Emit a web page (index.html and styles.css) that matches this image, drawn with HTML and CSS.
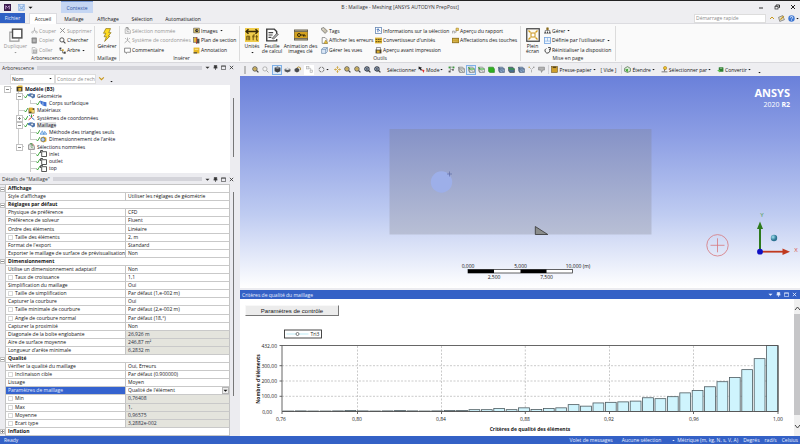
FILE: index.html
```html
<!DOCTYPE html>
<html lang="fr">
<head>
<meta charset="utf-8">
<title>B : Maillage - Meshing [ANSYS AUTODYN PrepPost]</title>
<link rel="stylesheet" href="styles.css">
</head>
<body>
<svg class="sprite" aria-hidden="true">
  <symbol id="app" viewBox="0 0 12 12"><rect width="12" height="12" fill="#3b1b4d"/><path d="M3 9V3l3 3 3-3v6" fill="none" stroke="#c9a7d8" stroke-width="1.5"/></symbol>
  <symbol id="save" viewBox="0 0 12 12"><rect x="1" y="1" width="10" height="10" fill="#dce9fa" stroke="#7da7dd"/><path d="M3 1v4h6V1M3 11V8h6v3M4 6l2 2 4-4" fill="none" stroke="#5c8fd0"/></symbol>
  <symbol id="dup" viewBox="0 0 24 24"><path d="M7 7H1.500v15.500H17V18" fill="#fff" stroke="#999" stroke-width="2"/><rect x="6" y="2" width="16" height="15" fill="#fff" stroke="#4d4d4d" stroke-width="2.500"/></symbol>
  <symbol id="cut" viewBox="0 0 12 12"><path d="M6 1v6M6 5L3 9M6 5l3 4" stroke="#aaa" stroke-width="1.300"/><circle cx="2.500" cy="9" r="1.500" fill="none" stroke="#aaa"/><circle cx="9.500" cy="9" r="1.500" fill="none" stroke="#aaa"/></symbol>
  <symbol id="copy" viewBox="0 0 12 12"><rect x="1" y="1" width="9" height="10" rx="1" fill="#888"/><path d="M3 4h5M3 6h5M3 8h5" stroke="#ddd"/></symbol>
  <symbol id="paste" viewBox="0 0 12 12"><path d="M2 1h5l3 3v7H2z" fill="#fff" stroke="#999"/><rect x="4.500" y="5" width="5" height="5" fill="#ccc" stroke="#999"/></symbol>
  <symbol id="cross" viewBox="0 0 12 12"><path d="M2 2l8 8M10 2l-8 8" stroke="#888" stroke-width="1.500"/></symbol>
  <symbol id="find" viewBox="0 0 12 12"><circle cx="5" cy="5" r="3.600" fill="#fff" stroke="#444" stroke-width="1.500"/><path d="M7.500 7.500L11 11" stroke="#444" stroke-width="2"/></symbol>
  <symbol id="treei" viewBox="0 0 12 12"><path d="M2 2v4h4v4h3" fill="none" stroke="#444"/><rect x="1" y="1" width="3" height="3" fill="#444"/><rect x="5" y="4" width="3" height="3" fill="#c49a22"/><rect x="8" y="8" width="3.500" height="3.500" fill="#444"/></symbol>
  <symbol id="bolt" viewBox="0 0 16 24"><path d="M6 1h8l-3 7h4l-5 6h3L4 23l3-8H3l3-6H2z" fill="#ffdc20" stroke="#8a7214" stroke-width="1.200"/></symbol>
  <symbol id="namesel" viewBox="0 0 12 12"><path d="M2 3h6l3 3v5H2z" fill="#eee" stroke="#999"/><path d="M3 1h4v4M5 6l3 3" fill="none" stroke="#888" stroke-width="1.500"/></symbol>
  <symbol id="axesg" viewBox="0 0 12 12"><path d="M6 6V1M6 6l5 4M6 6l-5 4M2 2l2 2M10 2L8 4" stroke="#999" stroke-width="1.300"/></symbol>
  <symbol id="comment" viewBox="0 0 12 12"><path d="M1 2h10v7H6l-2 2V9H1z" fill="#fff" stroke="#444"/></symbol>
  <symbol id="camera" viewBox="0 0 12 12"><path d="M1 2h10v8H1z" fill="#e1c76a" stroke="#555"/><circle cx="6.500" cy="6" r="2.600" fill="#222"/><circle cx="7" cy="5.500" r="1" fill="#ddd"/></symbol>
  <symbol id="section" viewBox="0 0 12 12"><rect x="5" y="3" width="6" height="8" fill="#4b4b4b"/><rect x="1" y="1" width="6" height="8" fill="#e2b93b" stroke="#555"/><path d="M6 0v12" stroke="#c22"/></symbol>
  <symbol id="annot" viewBox="0 0 12 12"><rect x="1" y="1" width="10" height="10" fill="#e8b824"/><path d="M1 9h6v2H1z" fill="#444"/><path d="M3 4h6" stroke="#f9e08a" stroke-width="2"/></symbol>
  <symbol id="units" viewBox="0 0 24 24"><rect width="24" height="24" fill="#f0cd4c"/><path d="M2 6h20M6 2L2 6l4 4M18 2l4 4-4 4" fill="none" stroke="#3a2c08" stroke-width="2.500"/><path d="M3 21v-7h5v7M5.500 14v7M14 21v-9h3M12.500 15h4M20 12v9h2M18 15h4" fill="none" stroke="#6d540e" stroke-width="1.700"/></symbol>
  <symbol id="sheet" viewBox="0 0 24 24"><path d="M20 11V6l-4-4H3v20h17v-3" fill="#fff" stroke="#3c3c3c" stroke-width="2.400"/><path d="M6 8h8M6 12h7M6 16h5" stroke="#444" stroke-width="2"/><path d="M12 18l8-9 3 2-8 8z" fill="#aaa" stroke="#444"/></symbol>
  <symbol id="film" viewBox="0 0 28 22"><rect width="28" height="22" fill="#66604e"/><rect x="1" y="5" width="26" height="12" fill="#d3a11f"/><path d="M3 2.500h23M3 19.500h23" stroke="#e9dcb0" stroke-width="2" stroke-dasharray="2 2"/><circle cx="10" cy="11" r="3" fill="none" stroke="#332808" stroke-width="2"/><path d="M13 11h9v3M19 11v3" fill="none" stroke="#332808" stroke-width="2"/></symbol>
  <symbol id="tag" viewBox="0 0 12 12"><path d="M1 2l4-1 6 6-4 4-6-6z" fill="#c9c3b0" stroke="#555"/><circle cx="3.500" cy="3.500" r="1" fill="#fff"/></symbol>
  <symbol id="errs" viewBox="0 0 12 12"><path d="M2 1h5l3 3v7H2z" fill="#fff" stroke="#555"/><path d="M8 5l4 6H5z" fill="#e8c03a" stroke="#6d5512" stroke-width=".6"/></symbol>
  <symbol id="views" viewBox="0 0 12 12"><path d="M1 4l3-3h7v7l-3 3H1z" fill="#dbe7f7" stroke="#56789f"/><path d="M1 4h7v7M8 4l3-3" fill="none" stroke="#56789f"/></symbol>
  <symbol id="info" viewBox="0 0 12 12"><rect x="1" y="1" width="10" height="10" fill="#fff" stroke="#6a89b4" stroke-width="1.400"/><path d="M5 3v6M3 5l2-2 4 4" fill="none" stroke="#3869b1" stroke-width="1.500"/></symbol>
  <symbol id="conv" viewBox="0 0 12 12"><rect y="1" width="12" height="10" fill="#e5bb3a"/><path d="M1 4h10M1 8h10" stroke="#4c3b0c" stroke-width="1.600" stroke-dasharray="3 1"/></symbol>
  <symbol id="preview" viewBox="0 0 12 12"><rect x="1" y="4" width="10" height="7" fill="#4c412a"/><rect x="3" y="1" width="6" height="4" fill="#fff" stroke="#555"/><rect x="3" y="6" width="5" height="4" fill="#dcae2c"/></symbol>
  <symbol id="report" viewBox="0 0 12 12"><path d="M1 11V7h3v4M5 9h2V5" fill="none" stroke="#777"/><path d="M7 2h4v4H7z" fill="#f4d463" stroke="#99771a"/></symbol>
  <symbol id="keyb" viewBox="0 0 12 12"><rect y="2" width="12" height="8" fill="#c9a12e" stroke="#6d540e"/><path d="M2 4.500h8M2 7.500h8" stroke="#f5e2a0" stroke-dasharray="1 1"/></symbol>
  <symbol id="full" viewBox="0 0 28 28"><rect x="1.500" y="1.500" width="25" height="25" fill="#fdfbf2" stroke="#454545" stroke-width="2.500"/><rect x="10" y="10" width="8" height="8" fill="#fff" stroke="#c9941a" stroke-width="2"/><path d="M9 9L5 5M19 9l4-4M9 19l-4 4M19 19l4 4" stroke="#d29b1c" stroke-width="2.500"/></symbol>
  <symbol id="manage" viewBox="0 0 12 12"><path d="M6 1v5M2 8V6h8v2" fill="none" stroke="#555"/><rect x="4" y="1" width="4" height="4" fill="#8a6b1b"/><path d="M0 11l2-4 2 4zM4 11l2-4 2 4zM8 11l2-4 2 4z" fill="#444"/></symbol>
  <symbol id="layout" viewBox="0 0 12 12"><rect x="1" y="1" width="10" height="10" fill="#eef5fd" stroke="#74a4de" stroke-width="1.400"/><path d="M6 1v6M1 7h10" stroke="#74a4de"/></symbol>
  <symbol id="reset" viewBox="0 0 12 12"><path d="M4 2.500a4.200 4.200 0 1 0 5 1" fill="none" stroke="#333" stroke-width="1.500"/><path d="M7 1h4v4" fill="none" stroke="#333" stroke-width="1.500"/></symbol>
  <symbol id="min" viewBox="0 0 12 12"><path d="M2 8h8" stroke="#333" stroke-width="2"/></symbol>
  <symbol id="restore" viewBox="0 0 12 12"><path d="M4 4V2h7v5H9" fill="none" stroke="#333" stroke-width="2"/><rect x="2" y="5" width="6" height="5" fill="none" stroke="#333" stroke-width="1.500"/></symbol>
  <symbol id="x" viewBox="0 0 12 12"><path d="M2 2l8 8M10 2l-8 8" stroke="currentColor" stroke-width="2"/></symbol>
  <symbol id="up" viewBox="0 0 12 12"><path d="M2 8l4-4 4 4" fill="none" stroke="#c9981c" stroke-width="2"/></symbol>
  <symbol id="down" viewBox="0 0 12 12"><path d="M2 4l4 4 4-4" fill="none" stroke="#c9981c" stroke-width="2"/></symbol>
  <symbol id="opt" viewBox="0 0 12 12"><path d="M1 4l7-3 3 7-8 3z" fill="#e7e0c9" stroke="#555"/><path d="M4 8l6-6" stroke="#c39622" stroke-width="2"/></symbol>
  <symbol id="help" viewBox="0 0 12 12"><circle cx="6" cy="6" r="5.500" fill="#3f78d3"/><path d="M4 4.500q0-2 2-2t2 1.700T6 7M6 8v1.500" fill="none" stroke="#fff" stroke-width="1.400"/></symbol>
  <symbol id="caret" viewBox="0 0 12 12"><path d="M1 4h10L6 9z" fill="currentColor"/></symbol>
  <symbol id="pin" viewBox="0 0 12 12"><path d="M3 1h6v6H3zM1 7h10M6 7v5" fill="currentColor" stroke="currentColor" stroke-width="1.500"/></symbol>
  <symbol id="maxi" viewBox="0 0 12 12"><path d="M1 2h10v9H1zM1 3h10" fill="none" stroke="currentColor" stroke-width="1.500"/></symbol>
  <symbol id="check" viewBox="0 0 8 12"><path d="M1 7l2 3 5-8" fill="none" stroke="#2f9d2b" stroke-width="1.800"/></symbol>
  <symbol id="model" viewBox="0 0 12 12"><rect x="1" y="3" width="10" height="8" fill="#3d3525"/><path d="M1 3l3-2h7v3" fill="#e1b73a"/><rect x="4" y="5" width="5" height="5" fill="#e1b73a"/></symbol>
  <symbol id="geom" viewBox="0 0 12 12"><path d="M0 4l4-2 4 1 4 1v5l-4 2-3-3-5-1z" fill="#4d79bb"/><circle cx="7" cy="6" r="2.500" fill="#dbe6f4" stroke="#35496b"/></symbol>
  <symbol id="bodyi" viewBox="0 0 12 12"><path d="M0 1l6 2 5 1v7l-6-1-4-4z" fill="#3e6fd0"/><path d="M5 4v6" stroke="#fff"/></symbol>
  <symbol id="mat" viewBox="0 0 12 12"><rect x="1" y="2" width="10" height="9" fill="#584a21"/><path d="M2 1h6v7H2z" fill="#e0b02d"/><path d="M6 5h5v5H6z" fill="#efd276"/></symbol>
  <symbol id="axes" viewBox="0 0 12 12"><path d="M6 6V1" stroke="#2b9b2b" stroke-width="1.600"/><path d="M6 6l5 4M2 2l2 2" stroke="#2e67c8" stroke-width="1.600"/><path d="M6 6l-5 4M10 2L8 4" stroke="#d33" stroke-width="1.600"/></symbol>
  <symbol id="meth" viewBox="0 0 12 12"><path d="M0 9l4-6 3 6zM6 9l2-5 4 5z" fill="#bcd7f5" stroke="#3f84d2"/></symbol>
  <symbol id="sizing" viewBox="0 0 12 12"><path d="M1 3l5-2 5 2v6l-5 2-5-2z" fill="#d9a82a"/><circle cx="5" cy="6" r="3.300" fill="#b8cef0" stroke="#35588f"/></symbol>
  <symbol id="nsel" viewBox="0 0 12 12"><path d="M1 3h6l4 3v5H1z" fill="#e8e8e8" stroke="#555"/><path d="M3 1h4v5M5 6l3 3" fill="none" stroke="#3c8b3c" stroke-width="1.400"/><path d="M8 1l3 4" stroke="#c44"/></symbol>
  <symbol id="cube" viewBox="0 0 12 12"><rect x="3" y="3" width="8" height="8" fill="#fff" stroke="#333" stroke-width="1.400"/><path d="M1 1h4M1 1v4" stroke="#333" stroke-width="1.600"/></symbol>
  <symbol id="zoomi" viewBox="0 0 12 12"><circle cx="5" cy="5" r="3.800" fill="#e9cf7c" stroke="#4c4a45" stroke-width="1.500"/><path d="M3 5h4" stroke="#7a5a0a"/><path d="M8 8l3 3" stroke="#444" stroke-width="2.200"/></symbol>
  <symbol id="zoomb" viewBox="0 0 12 12"><circle cx="5" cy="5" r="3.800" fill="#9fb6d6" stroke="#3d434c" stroke-width="1.800"/><circle cx="5" cy="5" r="1.500" fill="#444"/><path d="M8 8l3 3" stroke="#444" stroke-width="2.200"/></symbol>
  <symbol id="zoomg" viewBox="0 0 12 12"><circle cx="5" cy="5" r="3.600" fill="#f6f6f6" stroke="#999" stroke-width="1.200"/><path d="M8 8l3 3" stroke="#999" stroke-width="1.600"/></symbol>
  <symbol id="solid" viewBox="0 0 12 12"><path d="M1 3l5-2 5 2v6l-5 2-5-2z" fill="#3e4145"/><path d="M1 3l5 2 5-2-5-2z" fill="#8c9096"/></symbol>
  <symbol id="solid2" viewBox="0 0 12 12"><path d="M1 5l5-2 5 2v4l-5 2-5-2z" fill="#55585c"/><path d="M1 5l5 2 5-2-5-2z" fill="#e5e7ea"/></symbol>
  <symbol id="rotc" viewBox="0 0 12 12"><path d="M1 5l4-2 4 2v4l-4 2-4-2z" fill="#4a4c50"/><path d="M5 3q3-3 6 0v4" fill="none" stroke="#b08a2a" stroke-width="1.600"/></symbol>
  <symbol id="link" viewBox="0 0 12 12"><rect x="1" y="1" width="4" height="4" fill="#eee" stroke="#aaa"/><rect x="7" y="7" width="4" height="4" fill="#eee" stroke="#aaa"/><path d="M5 4h3v3" fill="none" stroke="#aaa"/></symbol>
  <symbol id="rot" viewBox="0 0 12 12"><circle cx="6" cy="6" r="4.200" fill="none" stroke="#666" stroke-width="1.500" stroke-dasharray="5 1.600"/></symbol>
  <symbol id="pan" viewBox="0 0 12 12"><path d="M6 0l2 3H4zM6 12l2-3H4zM0 6l3-2v4zM12 6L9 4v4z" fill="#c99a22"/><path d="M6 3v6M3 6h6" stroke="#c99a22" stroke-width="1.200"/><circle cx="6" cy="6" r="1" fill="#fff"/></symbol>
  <symbol id="mode" viewBox="0 0 12 12"><path d="M1 1l6 2-2 1 2 3-2 1-2-3-2 1z" fill="#222"/><path d="M6 6l5 1-1 5z" fill="#d33"/></symbol>
  <symbol id="selp" viewBox="0 0 12 12"><path d="M4 1v10M4 2h6M4 6h4" stroke="#888" stroke-width="1.200" fill="none"/><rect x="1" y="1" width="3" height="3" fill="#3c9b3c"/><rect x="8" y="1" width="3" height="3" fill="#3c9b3c"/><rect x="7" y="5" width="3" height="3" fill="#666"/><rect x="1" y="8" width="3" height="3" fill="#555"/></symbol>
  <symbol id="selc" viewBox="0 0 12 12"><path d="M1 2h7l3 3v6H3L1 8z" fill="#dfe3df" stroke="#666"/><path d="M1 2l2 3h8M3 5v6M5 7l4 3" fill="none" stroke="#666"/></symbol>
  <symbol id="sele" viewBox="0 0 12 12"><path d="M1 2h7l3 3v6H3L1 8z" fill="#e8ece8" stroke="#666"/><path d="M1 2l2 3h8" fill="none" stroke="#2da52d" stroke-width="1.800"/><path d="M3 5v6M6 7l3 3" stroke="#555"/></symbol>
  <symbol id="selb" viewBox="0 0 12 12"><path d="M1 2h8l2 3v6H3L1 9z" fill="#2fb020" stroke="#257a1d"/></symbol>
  <symbol id="seln" viewBox="0 0 12 12"><path d="M1 2h7l3 3v6H3L1 8z" fill="#8caad0" stroke="#3c506d"/><path d="M1 2l2 3h8M3 5v6M6 7l3 3" fill="none" stroke="#2f3c50"/></symbol>
  <symbol id="selm" viewBox="0 0 12 12"><path d="M1 2h7l3 3v6H3L1 8z" fill="#49708f" stroke="#333"/><path d="M1 2l2 3h8" fill="none" stroke="#2da52d" stroke-width="1.800"/></symbol>
  <symbol id="pts" viewBox="0 0 12 12"><path d="M2 2l3 3M10 2L7 5M6 6v5" stroke="#aaa" stroke-width="1.500"/><circle cx="2" cy="2" r="1.200" fill="#c99a22"/><circle cx="10" cy="2" r="1.200" fill="#888"/></symbol>
  <symbol id="tagg" viewBox="0 0 12 12"><path d="M1 2h10v5H8l-2 4-1-4H1z" fill="#b3b3b3" stroke="#777"/></symbol>
  <symbol id="clip" viewBox="0 0 12 12"><rect x="1" y="1" width="10" height="10" fill="#cf9f2c" stroke="#6b531b"/><rect x="3" y="1" width="6" height="2.500" fill="#5d4a1b"/></symbol>
  <symbol id="ext" viewBox="0 0 12 12"><path d="M1 4l5-3 5 3v5l-5 2-5-2z" fill="#d8ead3" stroke="#4f6a4a" stroke-width="1.200"/><path d="M2 6l5-1-1 6z" fill="#35a52c"/></symbol>
  <symbol id="selby" viewBox="0 0 12 12"><circle cx="7" cy="3.500" r="2.800" fill="#efc12e" stroke="#a67c15"/><path d="M6 6v3M1 10h10" stroke="#555" stroke-width="1.300"/></symbol>
  <symbol id="cvt" viewBox="0 0 12 12"><rect x="3" y="2" width="8" height="8" rx="1" fill="#2f7f32"/><path d="M0 7h5v4z" fill="#5dc04e"/><path d="M5 4h4" stroke="#bfe5b8"/></symbol>
</svg>

<header class="titlebar">
  <div class="quick">
    <svg class="ic"><use href="#app"/></svg>
    <button class="icb" aria-label="Enregistrer"><svg class="ic"><use href="#save"/></svg></button>
    <svg class="ic tiny"><use href="#caret"/></svg>
    <span class="context">Contexte</span>
  </div>
  <h1>B : Maillage - Meshing [ANSYS AUTODYN PrepPost]</h1>
  <div class="winbtns">
    <button aria-label="Réduire"><svg class="ic sm"><use href="#min"/></svg></button>
    <button aria-label="Restaurer"><svg class="ic sm"><use href="#restore"/></svg></button>
    <button aria-label="Fermer"><svg class="ic sm"><use href="#x"/></svg></button>
  </div>
</header>
<nav class="tabs">
  <button class="tab file">Fichier</button>
  <button class="tab active">Accueil</button>
  <button class="tab">Maillage</button>
  <button class="tab">Affichage</button>
  <button class="tab">Sélection</button>
  <button class="tab auto">Automatisation</button>
  <div class="launch">
    <input type="text" aria-label="Démarrage rapide" placeholder="Démarrage rapide">
    <button class="icb" aria-label="Replier"><svg class="ic sm"><use href="#up"/></svg></button>
    <button class="icb" aria-label="Options"><svg class="ic"><use href="#opt"/></svg></button>
    <button class="icb" aria-label="Aide"><svg class="ic"><use href="#help"/></svg></button>
    <svg class="ic caret"><use href="#caret"/></svg>
  </div>
</nav>

<section class="ribbon">
  <div class="group g-tree">
    <div class="items">
      <button class="big off"><svg class="bi"><use href="#dup"/></svg><span>Dupliquer</span><svg class="ic caret"><use href="#caret"/></svg></button>
      <div class="stack">
        <button class="off"><svg class="ic"><use href="#cut"/></svg>Couper</button>
        <button class="off"><svg class="ic"><use href="#copy"/></svg>Copier</button>
        <button class="off"><svg class="ic"><use href="#paste"/></svg>Coller</button>
      </div>
      <div class="stack">
        <button class="off"><svg class="ic"><use href="#cross"/></svg>Supprimer</button>
        <button><svg class="ic"><use href="#find"/></svg>Chercher</button>
        <button><svg class="ic"><use href="#treei"/></svg>Arbre<svg class="ic caret"><use href="#caret"/></svg></button>
      </div>
    </div>
    <h2>Arborescence</h2>
  </div>
  <div class="group g-mesh">
    <div class="items"><button class="big"><svg class="bi"><use href="#bolt"/></svg><span>Générer</span></button></div>
    <h2>Maillage</h2>
  </div>
  <div class="group g-insert">
    <div class="items">
      <div class="stack">
        <button class="off"><svg class="ic"><use href="#namesel"/></svg>Sélection nommée</button>
        <button class="off"><svg class="ic"><use href="#axesg"/></svg>Système de coordonnées</button>
        <button><svg class="ic"><use href="#comment"/></svg>Commentaire</button>
      </div>
      <div class="stack">
        <button><svg class="ic"><use href="#camera"/></svg>Images<svg class="ic caret"><use href="#caret"/></svg></button>
        <button><svg class="ic"><use href="#section"/></svg>Plan de section</button>
        <button><svg class="ic"><use href="#annot"/></svg>Annotation</button>
      </div>
    </div>
    <h2>Insérer</h2>
  </div>
  <div class="group g-tools">
    <div class="items">
      <button class="big"><svg class="bi"><use href="#units"/></svg><span>Unités</span><svg class="ic caret"><use href="#caret"/></svg></button>
      <button class="big"><svg class="bi"><use href="#sheet"/></svg><span>Feuille<br>de calcul</span></button>
      <button class="big"><svg class="bi"><use href="#film"/></svg><span>Animation des<br>images clé</span></button>
      <div class="stack">
        <button><svg class="ic"><use href="#tag"/></svg>Tags</button>
        <button><svg class="ic"><use href="#errs"/></svg>Afficher les erreurs</button>
        <button><svg class="ic"><use href="#views"/></svg>Gérer les vues</button>
      </div>
      <div class="stack">
        <button><svg class="ic"><use href="#info"/></svg>Informations sur la sélection</button>
        <button><svg class="ic"><use href="#conv"/></svg>Convertisseur d'unités</button>
        <button><svg class="ic"><use href="#preview"/></svg>Aperçu avant impression</button>
      </div>
      <div class="stack">
        <button><svg class="ic"><use href="#report"/></svg>Aperçu du rapport</button>
        <button><svg class="ic"><use href="#keyb"/></svg>Affectations des touches</button>
      </div>
    </div>
    <h2>Outils</h2>
  </div>
  <div class="group g-page">
    <div class="items">
      <button class="big"><svg class="bi"><use href="#full"/></svg><span>Plein<br>écran</span></button>
      <div class="stack">
        <button><svg class="ic"><use href="#manage"/></svg>Gérer<svg class="ic caret"><use href="#caret"/></svg></button>
        <button><svg class="ic"><use href="#layout"/></svg>Définie par l'utilisateur<svg class="ic caret"><use href="#caret"/></svg></button>
        <button><svg class="ic"><use href="#reset"/></svg>Réinitialiser la disposition</button>
      </div>
    </div>
    <h2>Mise en page</h2>
  </div>
</section>

<main>
  <aside class="left">
    <div class="phead"><h3>Arborescence</h3><i class="grip"></i><svg class="ic ph"><use href="#caret"/></svg><svg class="ic ph"><use href="#pin"/></svg><svg class="ic ph"><use href="#maxi"/></svg><svg class="ic ph"><use href="#x"/></svg></div>
    <div class="filter">
      <div class="drop"><select aria-label="Filtre"><option>Nom</option></select><svg class="ic caret"><use href="#caret"/></svg></div>
      <input type="text" aria-label="Recherche" placeholder="Contour de rech">
      <button class="icb" aria-label="Développer"><svg class="ic"><use href="#down"/></svg></button>
      <svg class="ic caret low"><use href="#caret"/></svg>
    </div>
    <div class="pane">
      <ul class="tree">
        <li><i class="exp"></i><i class="ck"></i><svg class="ic"><use href="#model"/></svg><b>Modèle (B3)</b></li>
        <li><i class="sp"></i><i class="exp v"></i><svg class="ck"><use href="#check"/></svg><svg class="ic"><use href="#geom"/></svg><span>Géométrie</span></li>
        <li><i class="sp"></i><i class="v"></i><i class="v h last"></i><svg class="ck"><use href="#check"/></svg><svg class="ic"><use href="#bodyi"/></svg><span>Corps surfacique</span></li>
        <li><i class="sp"></i><i class="v h"></i><svg class="ck"><use href="#check"/></svg><svg class="ic"><use href="#mat"/></svg><span>Matériaux</span></li>
        <li><i class="sp"></i><i class="exp plus v"></i><svg class="ck"><use href="#check"/></svg><svg class="ic"><use href="#axes"/></svg><span>Systèmes de coordonnées</span></li>
        <li><i class="sp"></i><i class="exp v"></i><svg class="ck"><use href="#check"/></svg><svg class="ic"><use href="#geom"/></svg><span class="cur">Maillage</span></li>
        <li><i class="sp"></i><i class="v"></i><i class="v h"></i><svg class="ck"><use href="#check"/></svg><svg class="ic"><use href="#meth"/></svg><span>Méthode des triangles seuls</span></li>
        <li><i class="sp"></i><i class="v"></i><i class="v h last"></i><svg class="ck"><use href="#check"/></svg><svg class="ic"><use href="#sizing"/></svg><span>Dimensionnement de l'arête</span></li>
        <li><i class="sp"></i><i class="exp last v"></i><i class="ck"></i><svg class="ic"><use href="#nsel"/></svg><span>Sélections nommées</span></li>
        <li><i class="sp"></i><i class="sp"></i><i class="v h"></i><svg class="ck"><use href="#check"/></svg><svg class="ic"><use href="#cube"/></svg><span>inlet</span></li>
        <li><i class="sp"></i><i class="sp"></i><i class="v h"></i><svg class="ck"><use href="#check"/></svg><svg class="ic"><use href="#cube"/></svg><span>outlet</span></li>
        <li><i class="sp"></i><i class="sp"></i><i class="v h"></i><svg class="ck"><use href="#check"/></svg><svg class="ic"><use href="#cube"/></svg><span>top</span></li>
      </ul>
      <div class="bar bar-tree"><i></i></div>
    </div>
    <div class="phead details"><h3>Détails de "Maillage"</h3><i class="grip"></i><svg class="ic ph"><use href="#caret"/></svg><svg class="ic ph"><use href="#pin"/></svg><svg class="ic ph"><use href="#maxi"/></svg><svg class="ic ph"><use href="#x"/></svg></div>
    <div class="pane">
      <table>
        <tr class="cat"><td><i class="box"></i></td><th colspan="2">Affichage</th></tr>
        <tr><td></td><td>Style d'affichage</td><td>Utiliser les réglages de géométrie</td></tr>
        <tr class="cat"><td><i class="box"></i></td><th colspan="2">Réglages par défaut</th></tr>
        <tr><td></td><td>Physique de préférence</td><td>CFD</td></tr>
        <tr><td></td><td>Préférence de solveur</td><td>Fluent</td></tr>
        <tr><td></td><td>Ordre des éléments</td><td>Linéaire</td></tr>
        <tr><td></td><td><label><input type="checkbox">Taille des éléments</label></td><td>2, m</td></tr>
        <tr><td></td><td>Format de l'export</td><td>Standard</td></tr>
        <tr><td></td><td>Exporter le maillage de surface de prévisualisation</td><td>Non</td></tr>
        <tr class="cat"><td><i class="box"></i></td><th colspan="2">Dimensionnement</th></tr>
        <tr><td></td><td>Utilise un dimensionnement adaptatif</td><td>Non</td></tr>
        <tr><td></td><td><label><input type="checkbox">Taux de croissance</label></td><td>1,1</td></tr>
        <tr><td></td><td>Simplification du maillage</td><td>Oui</td></tr>
        <tr><td></td><td><label><input type="checkbox">Taille de simplification</label></td><td>Par défaut (1,e-002 m)</td></tr>
        <tr><td></td><td>Capturer la courbure</td><td>Oui</td></tr>
        <tr><td></td><td><label><input type="checkbox">Taille minimale de courbure</label></td><td>Par défaut (2,e-002 m)</td></tr>
        <tr><td></td><td><label><input type="checkbox">Angle de courbure normal</label></td><td>Par défaut (18,°)</td></tr>
        <tr><td></td><td>Capturer la proximité</td><td>Non</td></tr>
        <tr class="ro"><td></td><td>Diagonale de la boîte englobante</td><td>26,926 m</td></tr>
        <tr class="ro"><td></td><td>Aire de surface moyenne</td><td>246,87 m²</td></tr>
        <tr class="ro"><td></td><td>Longueur d'arête minimale</td><td>6,2832 m</td></tr>
        <tr class="cat"><td><i class="box"></i></td><th colspan="2">Qualité</th></tr>
        <tr><td></td><td>Vérifier la qualité du maillage</td><td>Oui, Erreurs</td></tr>
        <tr><td></td><td><label><input type="checkbox">Inclinaison cible</label></td><td>Par défaut (0.900000)</td></tr>
        <tr><td></td><td>Lissage</td><td>Moyen</td></tr>
        <tr class="sel"><td></td><td><label for="metric">Paramètres de maillage</label></td><td><div class="pick"><select id="metric"><option>Qualité de l'élément</option></select><span class="arrow"><svg class="ic"><use href="#caret"/></svg></span></div></td></tr>
        <tr class="ro"><td></td><td><label><input type="checkbox">Min</label></td><td>0,76408</td></tr>
        <tr class="ro"><td></td><td><label><input type="checkbox">Max</label></td><td>1,</td></tr>
        <tr class="ro"><td></td><td><label><input type="checkbox">Moyenne</label></td><td>0,96575</td></tr>
        <tr class="ro"><td></td><td><label><input type="checkbox">Ecart type</label></td><td>3,2882e-002</td></tr>
        <tr class="cat"><td><i class="box plus"></i></td><th colspan="2">Inflation</th></tr>
      </table>
      <div class="bar bar-det"><i></i></div>
    </div>
  </aside>

  <section class="right">
    <div class="tools">
      <i class="handle"></i>
      <button><svg class="ic"><use href="#zoomi"/></svg></button><button class="wide"><svg class="ic"><use href="#zoomg"/></svg></button>
      <button class="on"><svg class="ic"><use href="#solid"/></svg></button><button><svg class="ic"><use href="#solid2"/></svg></button><button class="wide"><svg class="ic"><use href="#rotc"/></svg></button>
      <button class="pale"><svg class="ic"><use href="#link"/></svg></button>
      <button class="wide rot"><svg class="ic"><use href="#rot"/></svg><svg class="ic caret"><use href="#caret"/></svg></button>
      <button><svg class="ic"><use href="#pan"/></svg></button><button><svg class="ic"><use href="#zoomi"/></svg></button><button><svg class="ic"><use href="#zoomi"/></svg></button><button><svg class="ic"><use href="#zoomb"/></svg></button><button><svg class="ic"><use href="#zoomb"/></svg></button>
      <span class="lbl">Sélectionner</span>
      <button class="txt mode"><svg class="ic"><use href="#mode"/></svg>Mode<svg class="ic caret"><use href="#caret"/></svg></button>
      <button><svg class="ic"><use href="#selp"/></svg></button><button><svg class="ic"><use href="#selc"/></svg></button><button class="on"><svg class="ic"><use href="#sele"/></svg></button><button><svg class="ic"><use href="#sele"/></svg></button><button><svg class="ic"><use href="#selb"/></svg></button><button><svg class="ic"><use href="#seln"/></svg></button><button><svg class="ic"><use href="#selm"/></svg></button><button><svg class="ic"><use href="#seln"/></svg></button><button><svg class="ic"><use href="#pts"/></svg></button><button><svg class="ic"><use href="#tagg"/></svg></button>
      <i class="vsep"></i>
      <button class="txt clip"><svg class="ic"><use href="#clip"/></svg>Presse-papier<svg class="ic caret"><use href="#caret"/></svg></button>
      <span class="vide">[ Vide ]</span>
      <i class="vsep"></i>
      <button class="txt"><svg class="ic"><use href="#ext"/></svg>Étendre<svg class="ic caret"><use href="#caret"/></svg></button>
      <button class="txt"><svg class="ic"><use href="#selby"/></svg>Sélectionner par<svg class="ic caret"><use href="#caret"/></svg></button>
      <button class="txt"><svg class="ic"><use href="#cvt"/></svg>Convertir<svg class="ic caret"><use href="#caret"/></svg></button>
      <svg class="ic caret low"><use href="#caret"/></svg>
    </div>

    <div class="view">
      <svg class="scene" viewBox="240 75 560 212">
        <defs>
          <radialGradient id="ball" cx=".35" cy=".35"><stop offset="0" stop-color="#9fe3f2"/><stop offset="1" stop-color="#2b7290"/></radialGradient>
          <linearGradient id="plate" x2="0" y2="1"><stop offset="0" stop-color="#8592c7"/><stop offset="1" stop-color="#b8bfd5"/></linearGradient>
        </defs>
        <rect x="389.500" y="128" width="262" height="105.500" fill="url(#plate)"/>
        <circle cx="441.500" cy="181" r="10.700" fill="#9dafe9"/>
        <path d="M447 173h5M449.500 170.500v5" stroke="#5562a0" stroke-width=".6"/>
        <path d="M535.300 225.500v8h12.500z" fill="#8a8d8c" stroke="#333" stroke-width=".8"/>
        <rect x="468" y="268.500" width="104.500" height="3.500" fill="#fff" stroke="#222" stroke-width=".7"/>
        <path d="M468 268.500h26v3.500h-26zM520.500 268.500h26v3.500h-26z" fill="#000"/>
        <g class="scale"><text x="468" y="267">0,000</text><text x="520.500" y="267">5,000</text><text x="578" y="267">10,000 (m)</text><text x="494" y="278">2,500</text><text x="546.500" y="278">7,500</text></g>
        <g fill="none" stroke="#d7777c" stroke-width=".8"><circle cx="717.500" cy="244.300" r="10.700"/><path d="M710.500 244.300h14M717.500 237.300v14"/></g>
        <path d="M760 250v-23" stroke="#2d7a1c" stroke-width="2"/><path d="M757 228l3-7.500 3 7.500z" fill="#2d7a1c"/>
        <path d="M760 250.700h24" stroke="#c0391f" stroke-width="1.800"/><path d="M782.500 247.500l7.500 3.200-7.500 3.200z" fill="#c0391f"/>
        <circle cx="760" cy="250.700" r="2.900" fill="#1010c4"/><circle cx="774" cy="237" r="3.200" fill="url(#ball)"/>
        <text x="762" y="216" class="ay">Y</text><text x="796" y="251" class="ax">X</text>
      </svg>
      <div class="brand"><strong>ANSYS</strong><span>2020 <b>R2</b></span></div>
    </div>

    <div class="chart">
      <div class="chead"><h3>Critères de qualité du maillage</h3><svg class="ic ph"><use href="#caret"/></svg><svg class="ic ph"><use href="#pin"/></svg><svg class="ic ph"><use href="#maxi"/></svg><svg class="ic ph"><use href="#x"/></svg></div>
      <div class="cbody">
        <div class="cmain">
          <button class="ctrl">Paramètres de contrôle</button>
          <svg class="plot" viewBox="240 316 554 120">
            <rect x="284.500" y="330" width="37" height="8" fill="#fff" stroke="#333" stroke-width=".9"/>
            <path d="M286.500 334h22" stroke="#c9eef7" stroke-width="1.200"/><circle cx="297.500" cy="334" r="1.500" fill="#fff" stroke="#333" stroke-width=".6"/>
            <text x="315" y="336" class="leg">Tri3</text>
            <g stroke="#b5b5b5" stroke-width=".7" stroke-dasharray="2 1.500"><path d="M282 365.700h496M282 381h496M282 396.300h496M357.500 346v65M441.500 346v65M525.300 346v65M609.500 346v65M693.500 346v65"/></g>
            <g id="bars"></g>
            <path d="M282 411.500v-66h496.300v66zM279.500 345.500h2.500M279.500 365.700h2.500M279.500 381h2.500M279.500 396.300h2.500M282 411.500v2.500M357.500 411.500v2.500M441.500 411.500v2.500M525.300 411.500v2.500M609.500 411.500v2.500M693.500 411.500v2.500M778 411.500v2.500" fill="none" stroke="#555" stroke-width=".9"/>
            <g class="yt"><text x="277" y="348">432,00</text><text x="277" y="368">300,00</text><text x="277" y="383">200,00</text><text x="277" y="398">100,00</text><text x="272" y="414">0,00</text></g>
            <g class="xt"><text x="281" y="421">0,76</text><text x="357" y="421">0,80</text><text x="441" y="421">0,84</text><text x="525" y="421">0,88</text><text x="609" y="421">0,92</text><text x="694" y="421">0,96</text><text x="778" y="421">1,00</text></g>
            <text class="ttl" x="530" y="431">Critères de qualité des éléments</text>
            <text class="ttl" transform="translate(260 379) rotate(-90)">Nombre d'éléments</text>
          </svg>
        </div>
        <div class="vscroll"><svg class="ic sm"><path d="M1 5l2.500-3L6 5"/></svg><i></i><svg class="ic sm"><path d="M1 1l2.500 3L6 1"/></svg></div>
      </div>
    </div>
  </section>
</main>

<footer><span class="ready">Ready</span><span>Volet de messages</span><span class="none">Aucune sélection</span><span><svg class="ic caret flip"><use href="#caret"/></svg> Métrique (m, kg, N, s, V, A)</span><span class="deg">Degrés</span><span class="rad">rad/s</span><span>Celsius</span></footer>
<script src="script.js"></script>
</body>
</html>
```
FILE: styles.css
```css
* { box-sizing: border-box; }
html, body { height: 100%; }
body {
  margin: 0; display: flex; flex-direction: column; overflow: hidden;
  background: #ececf0; color: #141414;
  font: 5px/6px "Open Sans", "Noto Sans", sans-serif;
}
button, input, select { font: inherit; color: inherit; margin: 0; padding: 0; border: 0; background: none; border-radius: 0; appearance: none; }
h1, h2, h3 { margin: 0; font: inherit; white-space: nowrap; }
ul { list-style: none; margin: 0; padding: 0; }
i { display: block; flex: none; }
.sprite { position: absolute; width: 0; height: 0; }
.ic { width: 7px; height: 7px; flex: none; display: block; }
.ic.sm { width: 6px; height: 6px; }
.ic.tiny { width: 5px; height: 5px; }
.ic.caret { width: 3px; height: 3px; margin-left: 1px; }
.icb { display: flex; align-items: center; }

.titlebar { border-top: 1px solid #222; height: 13px; display: grid; grid-template-columns: 1fr auto 1fr; align-items: center; background: #eeeef1; }
.titlebar h1 { color: #333; }
.quick { display: flex; align-items: center; gap: 3px; height: 12px; padding-left: 4px; }
.quick .icb { margin-left: 4px; }
.context { margin-left: 25px; width: 32px; height: 12px; line-height: 12px; text-align: center; background: #c5d6f3; color: #2f55a4; border-top: 1px solid #7f9fdb; }
.winbtns { display: flex; justify-content: flex-end; gap: 10px; padding-right: 4px; color: #222; }

.tabs { display: flex; height: 11px; background: #eeeef1; border-bottom: 1px solid #dcdce0; flex: none; }
.tab { width: 34px; text-align: center; height: 11px; }
.tab.file { width: 25px; background: #2f60c4; color: #eef3fd; margin-right: 4px; height: 10px; }
.tab.active { width: 28px; background: #fff; border: 1px solid #dcdce0; border-bottom: 0; }
.tab.auto { width: 48px; }
.launch { display: flex; align-items: center; gap: 3px; margin-left: auto; padding-right: 1px; }
.launch input { width: 72px; height: 9px; background: #fff; border: 1px solid #ddd; padding-left: 1px; }
.launch .caret { margin-left: -2px; }
::placeholder { color: #8c8c8c; opacity: 1; }

.ribbon { display: flex; background: #fafafa; height: 39px; flex: none; border-bottom: 1px solid #d8d8dc; padding: 2px 0 1px; }
.group { border-right: 1px solid #dcdcdc; display: flex; flex-direction: column; justify-content: space-between; }
.group h2 { text-align: center; color: #2c2c2c; }
.items { display: grid; height: 29px; }
.stack { display: grid; grid-template-rows: repeat(3, 1fr); height: 29px; justify-items: start; }
.stack button { display: flex; align-items: center; gap: 1px; white-space: nowrap; }
.big { display: flex; flex-direction: column; align-items: center; justify-content: flex-start; padding-top: 2px; white-space: nowrap; }
.big span { margin-top: 2px; line-height: 5px; }
.bi { width: 14px; height: 14px; display: block; flex: none; }
.big .caret { margin: 2px 0 0; }
.off { color: #969696; }
.g-tree { width: 95px; }
.g-tree .items { grid-template-columns: 31px 28px auto; }
.g-mesh { width: 25px; }
.g-insert { width: 120px; padding-left: 4px; }
.g-insert .items { grid-template-columns: 69px auto; }
.g-tools { width: 281px; }
.g-tools .items { grid-template-columns: 24px 16px 41px 54px 77px auto; }
.g-page { width: 95px; }
.g-page .items { grid-template-columns: 23px auto; }

main { flex: 1; min-height: 0; display: grid; grid-template-columns: 237px minmax(0, 1fr); column-gap: 3px; }
.left { display: grid; grid-template-rows: 9px 13px 88fr 11px 252fr; min-height: 0; }
.phead { display: flex; align-items: center; gap: 3px; padding: 0 3px 0 2px; color: #333; }
.phead.details { padding-top: 1px; }
.ic.ph { width: 5px; height: 5px; }
.grip { flex: 1; height: 4px; background: radial-gradient(circle, #d4d4da 50%, transparent 55%) 0 0 / 2px 2px; }
.filter { display: flex; align-items: center; padding-left: 10px; }
.drop { display: flex; align-items: center; width: 45px; height: 10px; padding: 0 2px 0 1px; background: #fff; border: 1px solid #ddd; }
.drop select { flex: 1; }
.filter input { width: 41px; height: 10px; background: #fff; border: 1px solid #ddd; padding-left: 1px; }
.filter .icb { margin: 0 4px 0 2px; }
.low { align-self: flex-end; margin-bottom: 2px; }
.pane { display: flex; min-height: 0; overflow: hidden; }
.tree { flex: 1; background: #fff; display: grid; grid-template-rows: repeat(12, 1fr); color: #12121e; padding-bottom: 1px; }
.tree li { display: flex; align-items: center; white-space: nowrap; min-height: 0; }
.tree li > i { width: 12px; align-self: stretch; position: relative; }
.tree .ck, .tree li > i.ck { width: 4px; height: 6px; }
.tree span, .tree b { margin-left: 2px; }
.tree .cur { background: #e4e4e4; }
.tree .v { background: linear-gradient(#ccc, #ccc) no-repeat 6px 0 / 1px 100%; }
.tree .v.last { background-size: 1px 50%; }
.tree .h::after, .tree .exp::after { content: ""; position: absolute; left: 6px; right: 0; top: 3px; height: 1px; background: #ccc; }
.tree .exp::before, .box {
  content: ""; position: absolute; z-index: 1; left: 4px; top: 1px; width: 5px; height: 5px;
  background: linear-gradient(#888, #888) center / 3px 1px no-repeat, #fff; border: 1px solid #c2c2c2;
}
.tree .exp.plus::before, .box.plus { background: linear-gradient(#888, #888) center / 3px 1px no-repeat, linear-gradient(#888, #888) center / 1px 3px no-repeat, #fff; }
.box { position: static; }
.bar { width: 7px; display: flex; justify-content: center; }
.bar i { width: 1px; background: #777; }
.bar-tree i { margin: 13px 0 16px; }
.bar-det i { margin: 8px 0 40px; }

table { flex: 1; height: 100%; border-collapse: separate; border-spacing: 0; table-layout: fixed; background: #fff; border-top: 1px solid #c4c4c4; }
td, th { padding: 0 0 0 2px; line-height: 7px; text-align: left; white-space: nowrap; border-bottom: 1px solid #c9c9c9; border-right: 1px solid #c4c4c4; width: 105px; }
td:first-child { width: 6px; padding: 0; background: #ececf0; border-bottom: 0; }
td:nth-child(2) { width: 120px; }
td label { display: flex; align-items: center; }
td input { width: 5px; height: 5px; border: 1px solid #d8d8d8; background: #fff; margin-right: 2px; }
.ro td:last-child { background: #e4e4dd; color: #2a3042; }
.sel td:nth-child(2) { background: #3563cf; color: #e6edfb; }
.pick { display: flex; align-items: center; justify-content: space-between; }
.pick select { flex: 1; height: 7px; line-height: 7px; }
.arrow { display: flex; align-items: center; justify-content: center; width: 7px; height: 7px; border: 1px solid #b5b5b5; background: #eee; }
.arrow .ic { width: 5px; height: 5px; }

.right { display: grid; grid-template-rows: 13px 212fr 148fr; min-width: 0; min-height: 0; }
.tools { display: flex; align-items: center; white-space: nowrap; background: #eeeef1; }
.tools button { width: 10px; height: 10px; display: flex; align-items: center; justify-content: center; flex: none; }
.tools .wide { margin-right: 2px; }
.tools .on { border: 1px solid #7fb0e6; background: #dceafa; }
.tools .pale { background: #fff; margin-right: 2px; }
.tools .rot { width: 15px; margin-right: 1px; }
.tools .txt { width: auto; margin-right: 6px; gap: 1px; }
.tools .txt .caret { margin-left: 0; }
.tools .mode { margin: 0 3px 0 2px; }
.tools .clip { margin-right: 5px; }
.handle { width: 2px; height: 8px; margin: 0 4px; background: radial-gradient(circle, #bbb 50%, transparent 55%) 0 0 / 2px 2px; }
.lbl { margin-left: 5px; }
.vide { margin-right: 3px; }
.vsep { width: 1px; height: 9px; background: #d2d2d6; margin: 0 2px; }
.view { position: relative; min-height: 0; background: linear-gradient(#6a80da 0%, #8c9ee4 28%, #becbf1 65%, #fff 100%); }
.scene { display: block; width: 100%; height: 100%; }
.scene text { font-size: 5px; text-anchor: middle; fill: #111; }
.scene .ay { font-size: 6px; fill: #4a9a4a; }
.scene .ax { font-size: 6px; fill: #d8523f; }
.brand { position: absolute; top: 9px; right: 10px; display: flex; flex-direction: column; align-items: flex-end; color: #fff; }
.brand strong { font-size: 11px; line-height: 15px; }
.brand span { font-size: 7px; line-height: 10px; }

.chart { display: flex; flex-direction: column; min-height: 0; padding-top: 2px; }
.chead { display: flex; align-items: center; gap: 3px; height: 9px; flex: none; padding: 0 3px 0 2px; background: #3461c6; color: #e8effd; }
.chead h3 { flex: 1; }
.cbody { flex: 1; min-height: 0; display: flex; background: #fff; }
.cmain { flex: 1; min-width: 0; display: flex; flex-direction: column; align-items: flex-start; padding: 6px 0 0; }
.ctrl { margin-left: 5px; width: 94px; height: 11px; flex: none; background: #ececec; border: 1px solid #f8f8f8; border-right-color: #777; border-bottom-color: #777; font: 6px/8px "Liberation Sans", Arial, sans-serif; }
.plot { flex: 1; min-height: 0; width: 100%; display: block; }
.plot text { font-size: 5px; fill: #1c1c1c; }
.plot .leg, .xt text, .plot .ttl { text-anchor: middle; }
.yt text { text-anchor: end; }
.plot .ttl { font-weight: 700; }
.plot .bar-q { fill: #cff4fd; stroke: #4d5b60; stroke-width: .8; }
.vscroll { width: 6px; display: flex; flex-direction: column; align-items: center; background: #f0f0f0; padding: 6px 0; }
.vscroll i { flex: 1; width: 6px; margin: 3px 0 9px; background: #c6c6c8; }
.vscroll path { fill: none; stroke: #444; }

footer { display: flex; align-items: center; height: 8px; flex: none; padding: 0 2px 0 4px; background: #3461c6; color: #e8effd; gap: 5px; white-space: nowrap; }
footer .ready { margin-right: auto; }
footer span { display: flex; align-items: center; gap: 2px; }
footer .none { margin: 0 5px 0 4px; }
footer .flip { width: 4px; height: 4px; transform: rotate(180deg); }
```
FILE: script.js
```js
// Element counts per quality class, from 0.76 to 1.00.
const counts = [3, 4, 3, 3, 4, 6, 4, 3, 4, 6, 4, 3, 4, 6, 6, 12, 12, 19, 12, 24, 13, 20, 24, 45, 35, 56, 60, 63, 68, 90, 84, 97, 122, 138, 162, 195, 222, 274, 346, 432];
const base = 411.5, left = 282, step = 12.4, unit = 66 / 432;
const bars = document.getElementById("bars");
counts.forEach((n, i) => {
  const r = document.createElementNS("http://www.w3.org/2000/svg", "rect");
  const h = n * unit;
  r.setAttribute("class", "bar-q");
  r.setAttribute("x", left + 1 + i * step);
  r.setAttribute("y", base - h);
  r.setAttribute("width", 10.8);
  r.setAttribute("height", h);
  bars.appendChild(r);
});
```
